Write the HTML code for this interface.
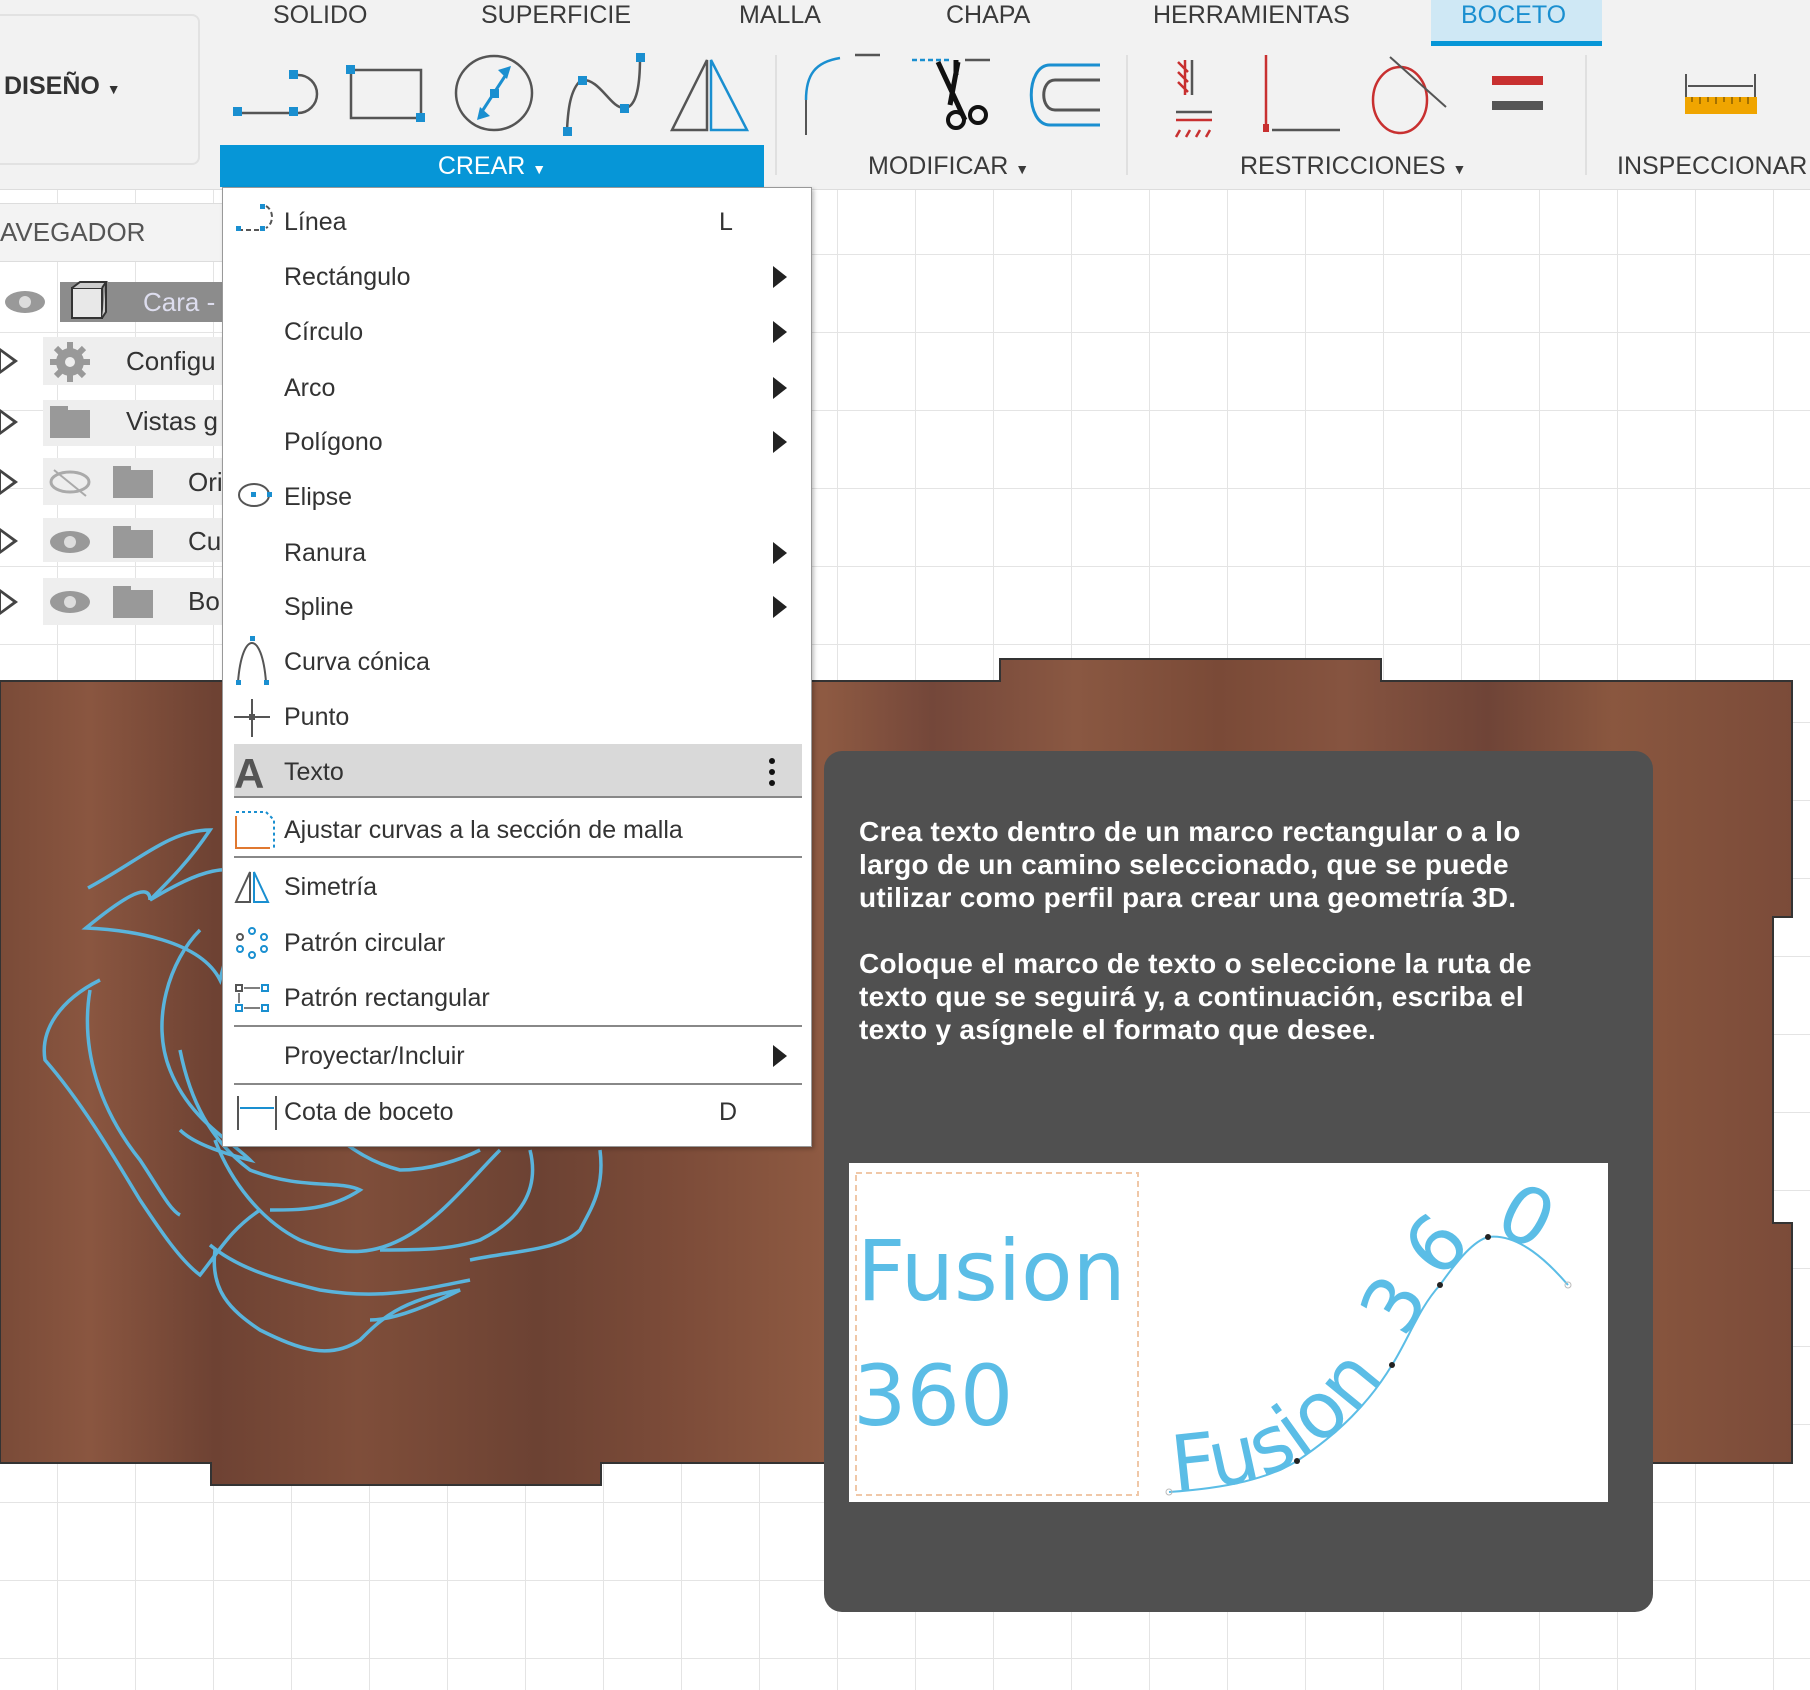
<!DOCTYPE html>
<html><head><meta charset="utf-8"><style>
*{margin:0;padding:0;box-sizing:border-box}
body{width:1810px;height:1690px;overflow:hidden;position:relative;font-family:"Liberation Sans",sans-serif;background:#fff;
background-image:linear-gradient(#e4e4e4 1px,transparent 1px),linear-gradient(90deg,#e4e4e4 1px,transparent 1px);background-size:78px 78px;background-position:57px 20px}
.a{position:absolute}
.tab{position:absolute;top:0;font-size:25px;color:#3a3a3a;height:30px;line-height:30px}
.mi{position:absolute;left:284px;font-size:25px;color:#333;line-height:30px}
.arr{position:absolute;left:773px;width:0;height:0;border-top:11px solid transparent;border-bottom:11px solid transparent;border-left:14px solid #222}
.row{position:absolute;left:43px;width:180px;background:#eeeeee}
.tri{position:absolute;left:0;width:0;height:0;border-top:13px solid transparent;border-bottom:13px solid transparent;border-left:18px solid #444}
.tri:after{content:"";position:absolute;left:-17px;top:-9px;border-top:9px solid transparent;border-bottom:9px solid transparent;border-left:12px solid #fff}
.nt{position:absolute;font-size:26px;color:#333}
.tip{position:absolute;left:859px;top:815px;width:730px;font-size:28px;font-weight:bold;color:#fff;line-height:33px;letter-spacing:0.3px}
</style></head><body>
<svg class="a" style="left:0;top:0" width="1810" height="1690">
<defs>
<linearGradient id="w" x1="0" x2="1" y1="0" y2="0">
<stop offset="0" stop-color="#7a4b38"/><stop offset=".05" stop-color="#8a5640"/><stop offset=".12" stop-color="#6e4233"/><stop offset=".2" stop-color="#7f4e3a"/><stop offset=".3" stop-color="#6c4233"/><stop offset=".38" stop-color="#7d4c39"/><stop offset=".46" stop-color="#8e5a42"/><stop offset=".52" stop-color="#74473a"/><stop offset=".6" stop-color="#8a5842"/><stop offset=".68" stop-color="#7a4a37"/><stop offset=".75" stop-color="#865440"/><stop offset=".83" stop-color="#6f4437"/><stop offset=".9" stop-color="#8a573f"/><stop offset="1" stop-color="#7b4b39"/>
</linearGradient></defs>
<path d="M0 681 H1000 V659 H1381 V681 H1792 V917 H1773 V1223 H1792 V1463 H601 V1485 H211 V1463 H0 Z" fill="url(#w)" stroke="#333" stroke-width="2"/>
<g fill="none" stroke="#5ab4dc" stroke-width="3.5">
<path d="M88 888 C140 860 170 830 210 830 C190 860 170 880 150 900 C200 870 230 860 260 880 C240 910 230 940 220 980 C200 940 130 930 86 928 C120 900 150 880 150 900"/>
<path d="M100 980 C60 1000 40 1030 45 1060 C80 1100 110 1150 140 1200 C160 1230 180 1260 200 1275 C220 1250 230 1230 260 1210"/>
<path d="M90 990 C80 1050 100 1110 140 1160 C160 1190 170 1210 180 1215"/>
<path d="M200 930 C170 960 150 1020 170 1070 C190 1120 230 1140 250 1160 C210 1150 190 1140 180 1130"/>
<path d="M240 930 C270 870 320 850 360 860 C330 880 320 900 320 930 C300 980 300 1040 330 1080 C350 1100 370 1110 380 1120"/>
<path d="M180 1050 C190 1100 210 1140 250 1170 C300 1190 340 1180 360 1190 C330 1210 300 1210 270 1210"/>
<path d="M215 1140 C230 1180 260 1220 300 1240 C350 1260 380 1250 400 1240 C440 1220 470 1180 500 1150"/>
<path d="M215 1250 C210 1290 230 1310 260 1330 C300 1350 330 1360 360 1340 C380 1320 400 1300 460 1290 C420 1310 390 1320 370 1320"/>
<path d="M210 1245 C240 1270 280 1280 320 1290 C380 1300 420 1290 470 1280"/>
<path d="M600 1150 C605 1190 590 1210 580 1230 C560 1250 520 1250 470 1260"/>
<path d="M530 1150 C540 1190 520 1220 480 1240 C450 1250 420 1250 380 1250"/>
<path d="M300 1090 C320 1130 360 1160 400 1170 C430 1170 460 1160 480 1150"/>
</g>
</svg>
<div class="a" style="left:0;top:0;width:1810px;height:190px;background:#f2f2f2;border-bottom:1px solid #ddd"></div>
<div class="a" style="left:-10px;top:14px;width:210px;height:151px;border:2px solid #e2e2e2;border-radius:8px;background:#f2f2f2"></div>
<div class="a" style="left:4px;top:72px;font-size:25px;font-weight:bold;color:#333">DISEÑO <span style="font-size:14px">▼</span></div>
<div class="tab" style="left:273px">SOLIDO</div>
<div class="tab" style="left:481px">SUPERFICIE</div>
<div class="tab" style="left:739px">MALLA</div>
<div class="tab" style="left:946px">CHAPA</div>
<div class="tab" style="left:1153px">HERRAMIENTAS</div>
<div class="a" style="left:1431px;top:0;width:171px;height:46px;background:#cfe8f5;border-bottom:5px solid #0696d7"></div>
<div class="tab" style="left:1461px;color:#1a8fd0">BOCETO</div>
<div class="a" style="left:775px;top:55px;width:2px;height:120px;background:#e0e0e0"></div>
<div class="a" style="left:1126px;top:55px;width:2px;height:120px;background:#e0e0e0"></div>
<div class="a" style="left:1585px;top:55px;width:2px;height:120px;background:#e0e0e0"></div>
<svg class="a" style="left:0;top:0" width="1810" height="190">
<g fill="none" stroke="#555" stroke-width="2.5">
<path d="M238 113 H290"/><path d="M298 75 A19 19 0 0 1 298 113"/>
<rect x="351" y="70" width="70" height="48"/>
<ellipse cx="494" cy="93" rx="38" ry="37"/>
<path d="M567 130 C568 110 570 90 581 80 C600 78 610 108 624 108 C638 108 640 80 640 58"/>
<path d="M672 130 L707 60 V130 Z"/>
</g>
<path d="M711 60 V130 H747 Z" fill="none" stroke="#1a8fd0" stroke-width="2.5"/>
<path d="M481 113 L507 73" stroke="#1a8fd0" stroke-width="3"/>
<g fill="#1a8fd0"><rect x="233" y="107" width="9" height="9"/><rect x="289" y="107" width="9" height="9"/><rect x="289" y="70" width="9" height="9"/><rect x="346" y="65" width="9" height="9"/><rect x="416" y="113" width="9" height="9"/><rect x="490" y="89" width="9" height="9"/><rect x="563" y="127" width="9" height="9"/><rect x="578" y="76" width="9" height="9"/><rect x="620" y="104" width="9" height="9"/><rect x="636" y="53" width="9" height="9"/><path d="M477 120 L480 107 L490 116 Z"/><path d="M511 66 L498 70 L507 79 Z"/></g>
<path d="M806 100 C806 75 815 62 840 58" fill="none" stroke="#1a8fd0" stroke-width="2.5"/><path d="M806 100 V135" stroke="#555" stroke-width="2"/><path d="M855 55 H880" stroke="#555" stroke-width="2.5"/>
<path d="M912 60 H950" stroke="#1a8fd0" stroke-width="2.5" stroke-dasharray="5 3"/><path d="M965 60 H990" stroke="#555" stroke-width="2.5"/>
<path d="M938 62 L965 120 M958 62 L950 105 M956 60 V75" stroke="#111" stroke-width="5"/>
<circle cx="956" cy="120" r="8" fill="none" stroke="#111" stroke-width="4"/><circle cx="978" cy="115" r="8" fill="none" stroke="#111" stroke-width="4"/>
<path d="M1100 65 H1050 C1025 65 1025 125 1050 125 H1100" fill="none" stroke="#1a8fd0" stroke-width="3"/>
<path d="M1100 80 H1055 C1040 80 1040 110 1055 110 H1100" fill="none" stroke="#555" stroke-width="3"/>
<g stroke="#c83030" stroke-width="2.5" fill="none"><path d="M1185 60 V95 M1178 62 L1188 72 M1178 72 L1188 82 M1178 82 L1188 92"/><path d="M1176 120 H1212 M1180 130 L1176 137 M1190 130 L1186 137 M1200 130 L1196 137 M1210 130 L1206 137"/><path d="M1266 55 V128"/><ellipse cx="1400" cy="100" rx="27" ry="33"/></g>
<path d="M1192 60 V95" stroke="#555" stroke-width="2.5"/><path d="M1176 112 H1212" stroke="#555" stroke-width="2.5"/>
<rect x="1263" y="124" width="6" height="8" fill="#c83030"/><path d="M1272 130 H1340" stroke="#555" stroke-width="2.5"/>
<path d="M1390 57 L1446 107" stroke="#555" stroke-width="2"/>
<rect x="1492" y="76" width="51" height="9" fill="#c83030"/><rect x="1492" y="101" width="51" height="9" fill="#555"/>
<path d="M1686 74 V98 M1755 74 V98 M1688 86 H1753" stroke="#555" stroke-width="2"/><rect x="1685" y="97" width="72" height="17" fill="#f0a500"/>
<path d="M1692 97 V102 M1700 97 V104 M1708 97 V102 M1716 97 V104 M1724 97 V102 M1732 97 V104 M1740 97 V102 M1748 97 V104" stroke="#8a6000" stroke-width="1.5"/>
</svg>
<div class="a" style="left:868px;top:152px;font-size:25px;color:#3a3a3a">MODIFICAR <span style="font-size:14px">▼</span></div>
<div class="a" style="left:1240px;top:152px;font-size:25px;color:#3a3a3a">RESTRICCIONES <span style="font-size:14px">▼</span></div>
<div class="a" style="left:1617px;top:152px;font-size:25px;color:#3a3a3a">INSPECCIONAR</div>
<div class="a" style="left:220px;top:145px;width:544px;height:42px;background:#0696d7;color:#fff;font-size:25px;text-align:center;line-height:42px">CREAR <span style="font-size:14px">▼</span></div>
<div class="a" style="left:0;top:203px;width:223px;height:59px;background:#f3f3f3;border-top:1px solid #ddd;border-bottom:1px solid #ddd"></div>
<div class="a" style="left:0;top:217px;font-size:26px;color:#555">AVEGADOR</div>
<div class="a" style="left:60px;top:282px;width:163px;height:40px;background:#8c8c8c"></div>
<svg class="a" style="left:0;top:280px" width="110" height="44"><ellipse cx="25" cy="22" rx="20" ry="11" fill="#999"/><circle cx="25" cy="22" r="6" fill="#ddd"/><path d="M72 8 H102 V38 H72 Z" fill="#e8e8e8" stroke="#333" stroke-width="2"/><path d="M72 8 L80 2 H106 L102 8 M106 2 V32 L102 38" fill="#ccc" stroke="#333" stroke-width="2"/></svg>
<div class="nt" style="left:143px;top:287px;color:#dde">Cara -</div>
<div class="row" style="top:337px;height:48px"></div><div class="row" style="top:400px;height:46px"></div><div class="row" style="top:458px;height:47px"></div><div class="row" style="top:518px;height:44px"></div><div class="row" style="top:578px;height:47px"></div>
<div class="tri" style="top:348px"></div><div class="tri" style="top:409px"></div><div class="tri" style="top:469px"></div><div class="tri" style="top:528px"></div><div class="tri" style="top:589px"></div>
<svg class="a" style="left:40px;top:330px" width="120" height="300" fill="#999">
<circle cx="30" cy="32" r="14"/><g stroke="#999" stroke-width="6"><path d="M30 12 V52 M10 32 H50 M16 18 L44 46 M44 18 L16 46"/></g><circle cx="30" cy="32" r="5" fill="#eee"/>
<path d="M10 76 H28 V80 H50 V108 H10 Z"/>
<ellipse cx="30" cy="152" rx="19" ry="10" fill="none" stroke="#aaa" stroke-width="3"/><path d="M14 140 L46 166" stroke="#aaa" stroke-width="2"/>
<ellipse cx="30" cy="212" rx="20" ry="11"/><circle cx="30" cy="212" r="6" fill="#ddd"/>
<ellipse cx="30" cy="272" rx="20" ry="11"/><circle cx="30" cy="272" r="6" fill="#ddd"/>
<path d="M73 136 H91 V140 H113 V168 H73 Z M73 196 H91 V200 H113 V228 H73 Z M73 256 H91 V260 H113 V288 H73 Z"/>
</svg>
<div class="nt" style="left:126px;top:346px">Configu</div>
<div class="nt" style="left:126px;top:406px">Vistas g</div>
<div class="nt" style="left:188px;top:467px">Ori</div>
<div class="nt" style="left:188px;top:526px">Cu</div>
<div class="nt" style="left:188px;top:586px">Bo</div>
<div class="a" style="left:222px;top:187px;width:590px;height:960px;background:#fff;border:1px solid #999;box-shadow:2px 2px 4px rgba(0,0,0,.25)"></div>
<div class="a" style="left:234px;top:744px;width:568px;height:54px;background:#d9d9d9;border-bottom:2px solid #888"></div>
<div class="a" style="left:234px;top:856px;width:568px;height:2px;background:#888"></div>
<div class="a" style="left:234px;top:1025px;width:568px;height:2px;background:#888"></div>
<div class="a" style="left:234px;top:1083px;width:568px;height:2px;background:#888"></div>
<div class="mi" style="top:207px">Línea</div><div class="mi" style="top:207px;left:719px">L</div>
<div class="mi" style="top:262px">Rectángulo</div><div class="arr" style="top:266px"></div>
<div class="mi" style="top:317px">Círculo</div><div class="arr" style="top:321px"></div>
<div class="mi" style="top:373px">Arco</div><div class="arr" style="top:377px"></div>
<div class="mi" style="top:427px">Polígono</div><div class="arr" style="top:431px"></div>
<div class="mi" style="top:482px">Elipse</div>
<div class="mi" style="top:538px">Ranura</div><div class="arr" style="top:542px"></div>
<div class="mi" style="top:592px">Spline</div><div class="arr" style="top:596px"></div>
<div class="mi" style="top:647px">Curva cónica</div>
<div class="mi" style="top:702px">Punto</div>
<div class="mi" style="top:757px">Texto</div>
<div class="mi" style="top:815px">Ajustar curvas a la sección de malla</div>
<div class="mi" style="top:872px">Simetría</div>
<div class="mi" style="top:928px">Patrón circular</div>
<div class="mi" style="top:983px">Patrón rectangular</div>
<div class="mi" style="top:1041px">Proyectar/Incluir</div><div class="arr" style="top:1045px"></div>
<div class="mi" style="top:1097px">Cota de boceto</div><div class="mi" style="top:1097px;left:719px">D</div>
<svg class="a" style="left:230px;top:190px" width="580" height="960">
<g fill="none" stroke="#555" stroke-width="2">
<path d="M8 40 H30 M36 16 A10 12 0 0 1 36 38" stroke-dasharray="5 3"/>
<ellipse cx="24" cy="305" rx="15" ry="11"/>
<path d="M8 492 C12 440 32 440 36 492"/>
<path d="M4 527 H40 M22 509 V547"/>
<path d="M8 906 V940 M46 906 V940"/>
</g>
<rect x="19" y="524" width="6" height="6" fill="#555"/>
<g fill="#1a8fd0"><rect x="6" y="36" width="5" height="5"/><rect x="30" y="36" width="5" height="5"/><rect x="30" y="14" width="5" height="5"/><rect x="21" y="302" width="5" height="5"/><rect x="37" y="302" width="5" height="5"/><rect x="20" y="446" width="5" height="5"/><rect x="6" y="490" width="5" height="5"/><rect x="34" y="490" width="5" height="5"/></g>
<text x="4" y="598" font-family="Liberation Sans" font-weight="bold" font-size="42" fill="#555">A</text>
<circle cx="542" cy="571" r="3" fill="#111"/><circle cx="542" cy="582" r="3" fill="#111"/><circle cx="542" cy="593" r="3" fill="#111"/>
<path d="M6 626 V658 H40" fill="none" stroke="#e07830" stroke-width="2"/><path d="M6 622 H36 L44 630 V658" fill="none" stroke="#1a8fd0" stroke-width="2" stroke-dasharray="3 3"/>
<path d="M6 712 L20 682 V712 Z" fill="none" stroke="#555" stroke-width="2"/><path d="M24 682 V712 H38 Z" fill="none" stroke="#1a8fd0" stroke-width="2"/>
<g fill="none" stroke="#1a8fd0" stroke-width="2"><circle cx="22" cy="741" r="3"/><circle cx="34" cy="747" r="3"/><circle cx="34" cy="759" r="3"/><circle cx="22" cy="765" r="3"/><circle cx="10" cy="759" r="3"/></g><circle cx="10" cy="747" r="3" fill="none" stroke="#555" stroke-width="2"/>
<rect x="6" y="795" width="6" height="6" fill="none" stroke="#555" stroke-width="2"/><path d="M9 803 V813 M14 798 H30 M14 818 H30" stroke="#555" stroke-width="1.5"/><g fill="none" stroke="#1a8fd0" stroke-width="2"><rect x="32" y="795" width="6" height="6"/><rect x="6" y="815" width="6" height="6"/><rect x="32" y="815" width="6" height="6"/></g>
<path d="M10 918 H44" stroke="#1a8fd0" stroke-width="2"/>
</svg>
<div class="a" style="left:824px;top:751px;width:829px;height:861px;background:#505050;border-radius:18px"></div>
<div class="tip">Crea texto dentro de un marco rectangular o a lo largo de un camino seleccionado, que se puede utilizar como perfil para crear una geometría 3D.<br><br>Coloque el marco de texto o seleccione la ruta de texto que se seguirá y, a continuación, escriba el texto y asígnele el formato que desee.</div>
<svg class="a" style="left:849px;top:1163px" width="759" height="339">
<rect width="759" height="339" fill="#fff"/>
<rect x="7" y="10" width="282" height="322" fill="none" stroke="#f0c8a8" stroke-width="2" stroke-dasharray="6 4"/>
<text x="8" y="137" font-family="DejaVu Sans,Liberation Sans,sans-serif" font-size="84" fill="#5bbde6">Fusion</text>
<text x="4" y="262" font-family="DejaVu Sans,Liberation Sans,sans-serif" font-size="84" fill="#5bbde6">360</text>
<path id="cp" d="M320 329 C380 325 420 315 448 298 C490 270 520 240 543 202 C560 175 570 145 591 122 C610 95 625 78 639 74 C670 70 700 100 719 122" fill="none" stroke="#5bbde6" stroke-width="2"/>
<text font-family="DejaVu Sans,Liberation Sans,sans-serif" font-size="78" fill="#5bbde6"><textPath href="#cp" startOffset="5">Fusion<tspan letter-spacing="18"> 360</tspan></textPath></text>
<g fill="#222"><circle cx="448" cy="298" r="3"/><circle cx="543" cy="202" r="3"/><circle cx="591" cy="122" r="3"/><circle cx="639" cy="74" r="3"/></g>
<circle cx="320" cy="329" r="3" fill="none" stroke="#bbb"/><circle cx="719" cy="122" r="3" fill="none" stroke="#bbb"/>
</svg>
</body></html>
